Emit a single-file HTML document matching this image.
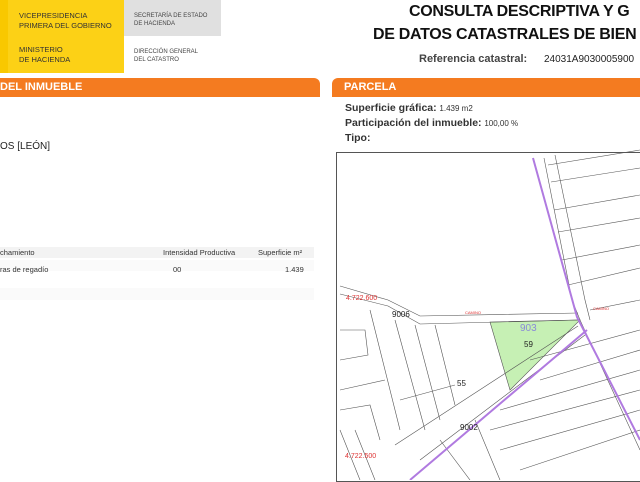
<!DOCTYPE html>
<html><head><meta charset="utf-8"><style>
body{margin:0;width:640px;height:480px;overflow:hidden;background:#fff;font-family:"Liberation Sans",sans-serif;position:relative}
div{position:absolute}
.s{font-size:6px;color:#444;line-height:8px}
.y{font-size:7.5px;color:#333;line-height:10px}
.bar{background:#f47b20;height:19px;color:#fff;font-weight:bold;font-size:11px;line-height:19px;border-radius:0 6px 0 0}
.b{font-weight:bold;color:#333;font-size:10.5px}
</style></head><body>
<div style="left:0;top:0;width:124px;height:73px;background:#fcd116"></div>
<div style="left:0;top:0;width:8px;height:73px;background:#f9c800"></div>
<div style="left:124px;top:0;width:97px;height:36px;background:#e0e0e0"></div>
<div class="y" style="left:19px;top:11px">VICEPRESIDENCIA<br>PRIMERA DEL GOBIERNO</div>
<div class="y" style="left:19px;top:45px">MINISTERIO<br>DE HACIENDA</div>
<div class="s" style="left:134px;top:12px">SECRETARÍA DE ESTADO<br>DE HACIENDA</div>
<div class="s" style="left:134px;top:48px">DIRECCIÓN GENERAL<br>DEL CATASTRO</div>
<div style="left:409px;top:3px;font-size:16px;font-weight:bold;color:#111;white-space:nowrap;letter-spacing:-0.3px">CONSULTA DESCRIPTIVA Y G</div>
<div style="left:373px;top:26px;font-size:16px;font-weight:bold;color:#111;white-space:nowrap;letter-spacing:-0.3px">DE DATOS CATASTRALES DE BIEN</div>
<div style="left:419px;top:53px;font-size:11px;font-weight:bold;color:#444;white-space:nowrap">Referencia catastral:</div>
<div style="left:544px;top:54px;font-size:10px;color:#222;white-space:nowrap">24031A9030005900</div>
<div class="bar" style="left:0;top:78px;width:320px;padding-left:0"> DEL INMUEBLE</div>
<div class="bar" style="left:332px;top:78px;width:320px;border-radius:6px 0 0 0;padding-left:12px">PARCELA</div>
<div style="left:0;top:141px;font-size:10px;color:#222">OS [LEÓN]</div>
<div style="left:0;top:247px;width:314px;height:11px;background:#f3f3f3"></div>
<div style="left:0;top:260px;width:314px;height:11px;background:#fafafa"></div>
<div style="left:0;top:288px;width:314px;height:12px;background:#fafafa"></div>
<div style="left:0;top:248px;font-size:7.5px;color:#333">chamiento</div>
<div style="left:163px;top:248px;font-size:7.5px;color:#333">Intensidad Productiva</div>
<div style="left:258px;top:248px;font-size:7.5px;color:#333">Superficie m²</div>
<div style="left:0;top:265px;font-size:7.5px;color:#333">ras de regadío</div>
<div style="left:173px;top:265px;font-size:7.5px;color:#333">00</div>
<div style="left:285px;top:265px;font-size:7.5px;color:#333">1.439</div>
<div style="left:345px;top:102px;font-size:10px;color:#333"><span class="b">Superficie gráfica:</span> <span style="font-size:8px">1.439 m2</span></div>
<div style="left:345px;top:117px;font-size:10px;color:#333"><span class="b">Participación del inmueble:</span> <span style="font-size:8px">100,00 %</span></div>
<div class="b" style="left:345px;top:132px">Tipo:</div>
<div style="left:336px;top:152px;width:310px;height:330px;border:1px solid #555;box-sizing:border-box"></div>
<svg style="position:absolute;left:0;top:0" width="640" height="480" viewBox="0 0 640 480">
<polygon points="490,322 580,320 510,390" fill="#c6f0b4" stroke="#555" stroke-width="0.6"/>
<g stroke="#555" stroke-width="0.6" fill="none">
<path d="M340,286 L388,300 L420,316 L578,313"/><path d="M340,294 L388,306 L420,324 L578,320"/>
<path d="M544,158 L572,300 L580,320 L640,450"/>
<path d="M555,155 L585,300 L590,320"/>
<path d="M548,165 L640,150 M551,182 L640,168 M554,210 L640,195 M558,232 L640,218 M562,260 L640,245 M568,285 L640,268 M590,310 L640,300"/>
<path d="M578,326 L395,445 M585,335 L420,460 M530,360 L640,330 M540,380 L640,350 M500,410 L640,370 M490,430 L640,390 M500,450 L640,410 M520,470 L640,430"/>
<path d="M370,310 L400,430 M395,320 L425,430 M415,325 L440,420 M435,325 L455,405 M340,330 L365,330 L368,355 L340,360 M340,390 L385,380 M400,400 L455,385 M340,410 L370,405 L380,440 M340,430 L360,480 M355,430 L375,480 M440,440 L470,480 M475,420 L500,480"/>
</g>
<path d="M533,158 L577,317 L640,440" stroke="#b07ae0" stroke-width="2" fill="none"/>
<path d="M587,330 L410,480" stroke="#b07ae0" stroke-width="2" fill="none"/>
<text x="346" y="300" font-size="7" fill="#d33" font-family="Liberation Sans">4.722.600</text>
<text x="345" y="458" font-size="7" fill="#d33" font-family="Liberation Sans">4.722.500</text>
<text x="392" y="317" font-size="8" fill="#222" font-family="Liberation Sans">9006</text>
<text x="460" y="430" font-size="8" fill="#222" font-family="Liberation Sans">9002</text>
<text x="457" y="386" font-size="8" fill="#222" font-family="Liberation Sans">55</text>
<text x="520" y="331" font-size="10" fill="#8a8ad8" font-family="Liberation Sans">903</text>
<text x="524" y="347" font-size="8" fill="#222" font-family="Liberation Sans">59</text>
<text x="465" y="314" font-size="4" fill="#d33" font-family="Liberation Sans">CAMINO</text>
<text x="593" y="310" font-size="4" fill="#d33" font-family="Liberation Sans">CAMINO</text>
</svg>
</body></html>
